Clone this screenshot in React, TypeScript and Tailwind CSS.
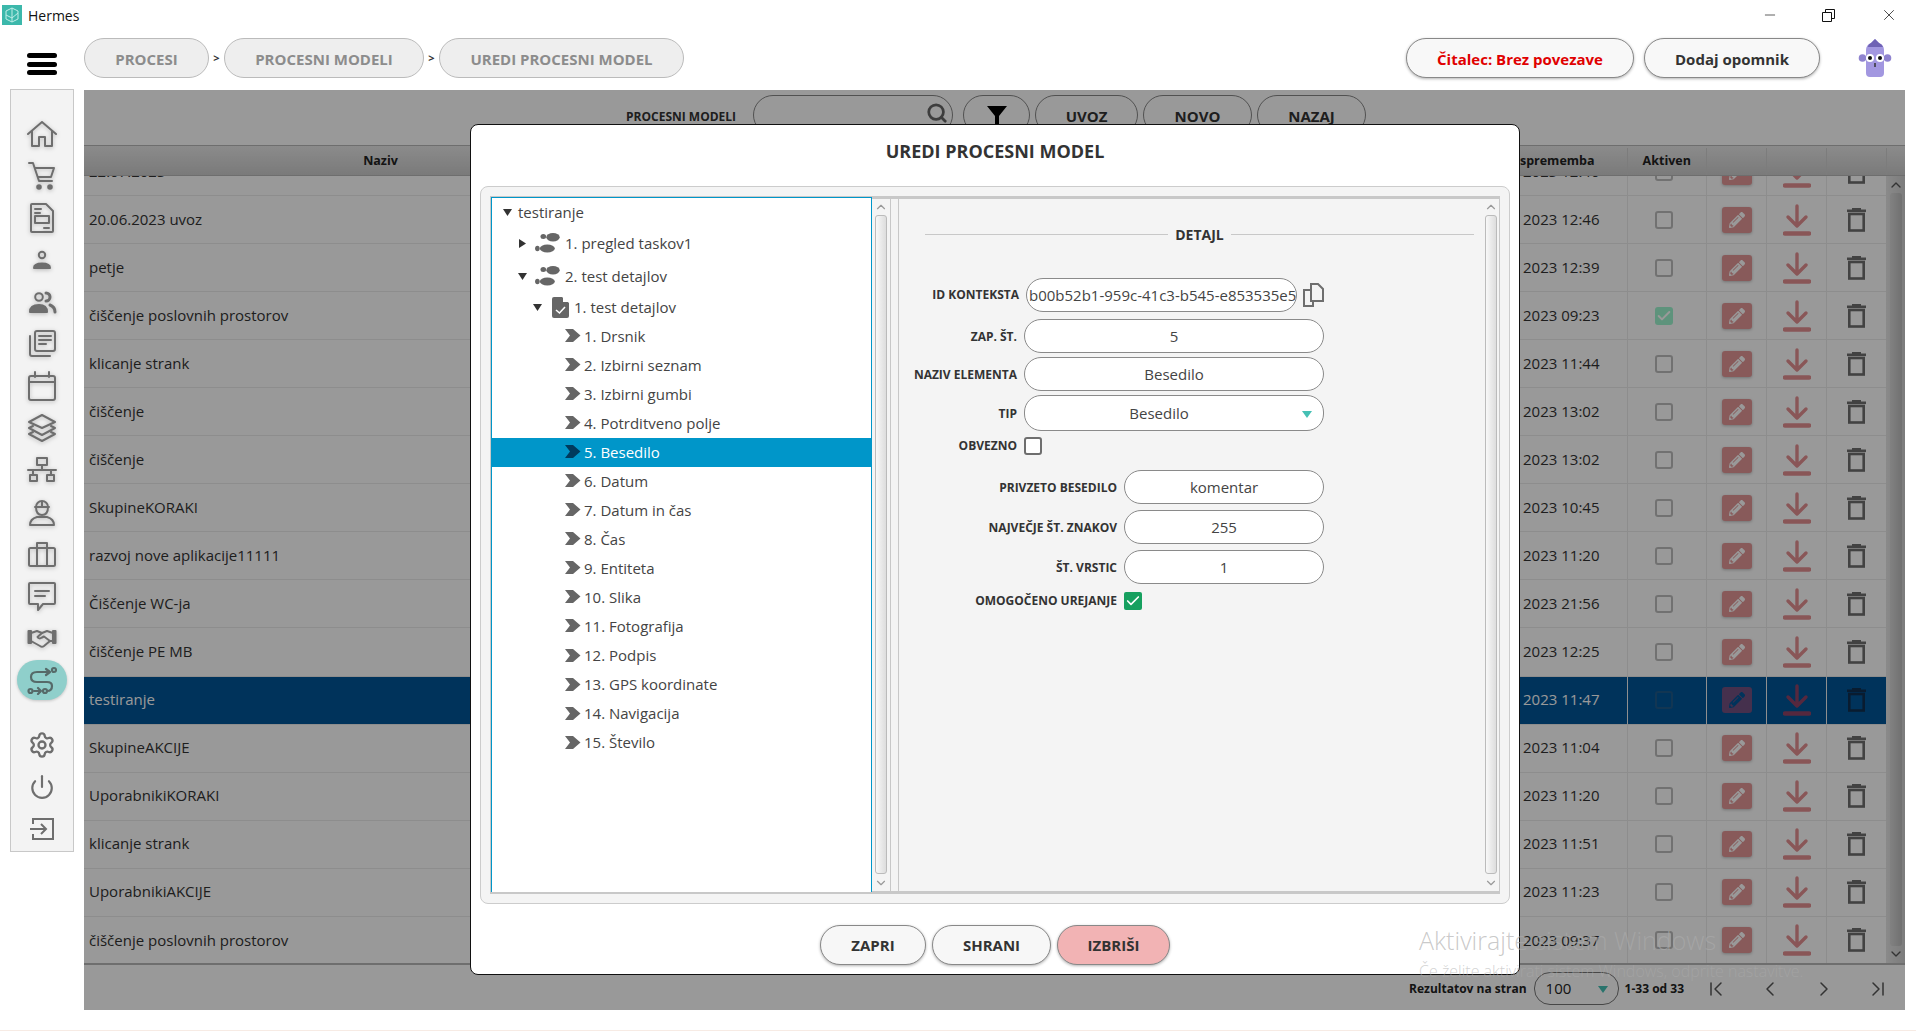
import { Settings, Power, ChevronUp, ChevronDown, ChevronLeft, ChevronRight, ChevronFirst, ChevronLast, Search, Check, Minus, X } from "lucide-react";
import { FaPencilAlt } from "react-icons/fa";

const rows = [
    { name: "22.07.2023", time: "2023 12:40" },
    { name: "20.06.2023 uvoz", time: "2023 12:46" },
    { name: "petje", time: "2023 12:39" },
    { name: "čiščenje poslovnih prostorov", time: "2023 09:23", active: true },
    { name: "klicanje strank", time: "2023 11:44" },
    { name: "čiščenje", time: "2023 13:02" },
    { name: "čiščenje", time: "2023 13:02" },
    { name: "SkupineKORAKI", time: "2023 10:45" },
    { name: "razvoj nove aplikacije11111", time: "2023 11:20" },
    { name: "Čiščenje WC-ja", time: "2023 21:56" },
    { name: "čiščenje PE MB", time: "2023 12:25" },
    { name: "testiranje", time: "2023 11:47", selected: true },
    { name: "SkupineAKCIJE", time: "2023 11:04" },
    { name: "UporabnikiKORAKI", time: "2023 11:20" },
    { name: "klicanje strank", time: "2023 11:51" },
    { name: "UporabnikiAKCIJE", time: "2023 11:23" },
    { name: "čiščenje poslovnih prostorov", time: "2023 09:37" },
];

const leaves = [
    "1. Drsnik", "2. Izbirni seznam", "3. Izbirni gumbi", "4. Potrditveno polje", "5. Besedilo",
    "6. Datum", "7. Datum in čas", "8. Čas", "9. Entiteta", "10. Slika", "11. Fotografija",
    "12. Podpis", "13. GPS koordinate", "14. Navigacija", "15. Število",
];

function NavIcon({ children }: { children: React.ReactNode }) {
    return (
        <svg width="30" height="30" viewBox="0 0 30 30" fill="none" stroke="#6e6e6e" strokeWidth="2" strokeLinecap="round" strokeLinejoin="round" className="drop-shadow-[0_1px_2px_rgba(0,0,0,0.25)]">
            {children}
        </svg>
    );
}

const navIcons = [
    <NavIcon key="home"><path d="M1 15 L15 3 L29 15" /><path d="M5 12 V27 H12 V18 H18 V27 H25 V12" /></NavIcon>,
    <NavIcon key="cart"><path d="M2 2 H6 L12 20 H25 M8 7 H27 L24 16 H11" /><circle cx="12" cy="26" r="1.8" fill="#6e6e6e" /><circle cx="23" cy="26" r="1.8" fill="#6e6e6e" /></NavIcon>,
    <NavIcon key="doc"><path d="M5 1 H19 L26 8 V28 Q26 29 25 29 H5 Q4 29 4 28 V2 Q4 1 5 1 Z" /><path d="M8 6 H14 M8 10 H13 M17 25 H22" /><rect x="8" y="13" width="14" height="7" /></NavIcon>,
    <NavIcon key="user"><circle cx="15" cy="10" r="3.2" /><path d="M7 23 Q7 18.5 15 18.5 Q23 18.5 23 23 Z" fill="#6e6e6e" /></NavIcon>,
    <NavIcon key="users"><circle cx="12" cy="10" r="3.8" /><path d="M19 6 A4 4 0 0 1 19 14" strokeWidth="3" /><path d="M3 25 Q3 18 12 18 Q20 18 20 25 Z" fill="#6e6e6e" /><path d="M23 18 Q28 20 28 25" strokeWidth="3" /></NavIcon>,
    <NavIcon key="list"><rect x="8" y="2" width="20" height="20" rx="2" /><path d="M12 7 H24 M12 11 H24 M12 15 H19" /><path d="M3 7 V25 Q3 27 5 27 H23" /></NavIcon>,
    <NavIcon key="calendar"><rect x="2" y="5" width="26" height="24" rx="2" /><path d="M2 11 H28 M8 1 V6 M22 1 V6" /></NavIcon>,
    <NavIcon key="layers"><path d="M15 2 L28 9 L15 15 L2 9 Z" /><path d="M6 13 L2 15 L15 22 L28 15 L24 13" /><path d="M6 19 L2 21 L15 28 L28 21 L24 19" /></NavIcon>,
    <NavIcon key="network"><rect x="10" y="3" width="10" height="7" /><path d="M15 10 V15 M1 15 H29 M6 15 V20 M24 15 V20" /><rect x="3" y="20" width="7" height="6" /><rect x="20" y="20" width="7" height="6" /></NavIcon>,
    <NavIcon key="worker"><path d="M9 10 A6 6 0 0 1 21 10 M8 10 H22 M15 4 V10" /><path d="M9 10 Q9 18 15 18 Q21 18 21 10" /><path d="M3 28 Q3 22 10 20 H20 Q27 22 27 28 Z" /></NavIcon>,
    <NavIcon key="case"><rect x="2" y="9" width="26" height="18" rx="1.5" /><path d="M10 9 V4 H20 V9 M10 9 V27 M20 9 V27" /></NavIcon>,
    <NavIcon key="message"><path d="M3 2 H27 Q28 2 28 3 V22 Q28 23 27 23 H16 L11 29 V23 H3 Q2 23 2 22 V3 Q2 2 3 2 Z" /><path d="M8 10 H22 M8 15 H18" /></NavIcon>,
    <NavIcon key="hands">
        <path d="M1.5 8 H4 V20 H1.5 Z M26 8 H28.5 V20 H26 Z" fill="#6e6e6e" />
        <path d="M4 10 L10 8 L15 10 L20 8 L26 10 V18 H23 L17 23 Q15 24.5 13 23 L4 18" />
        <path d="M15 10 L10.5 14 Q12 16.5 15 14.5 L17 13.5 L23 18" />
    </NavIcon>,
];

function Checkbox({ checked, selected }: { checked?: boolean; selected?: boolean }) {
    if (checked) {
        return (
            <div className="w-[18px] h-[18px] rounded-[3px] bg-[#9df5cf] flex items-center justify-center">
                <Check size={16} color="#ffffff" strokeWidth={3} />
            </div>
        );
    }
    return <div className={`w-[18px] h-[18px] rounded-[3px] border-2 ${selected ? "border-[#1f5a8a]" : "border-[#bdbdbd]"}`} />;
}

function DownloadIcon({ color }: { color: string }) {
    return (
        <svg width="28" height="32" viewBox="0 0 28 32" fill="none" stroke={color} strokeWidth="3.4" strokeLinecap="round" strokeLinejoin="round">
            <path d="M14 2 V22 M5 13 L14 22 L23 13" />
            <path d="M2 29.5 H26" strokeWidth="4.6" />
        </svg>
    );
}

function TrashIcon({ color }: { color: string }) {
    return (
        <svg width="19" height="24" viewBox="0 0 19 24" fill="none" stroke={color} strokeWidth="2.6">
            <rect x="2.3" y="6" width="14.4" height="16.5" />
            <path d="M0 2.8 H19" />
            <path d="M5 1 H14" strokeWidth="2" />
        </svg>
    );
}

function TableRow({ name, time, active, selected }: { name: string; time: string; active?: boolean; selected?: boolean }) {
    const line = selected ? "border-[#eeeeee]" : "border-[#ebebeb]";
    return (
        <div className={`flex h-[48.06px] shrink-0 items-center text-[15px] border-b border-[#ebebeb] ${selected ? "bg-[#005598] text-white" : "bg-white text-[#333333]"}`}>
            <div className="flex-1 pl-[5px] pb-[1px]">{name}</div>
            <div className="w-[240px] h-full flex items-center justify-end pr-[27px] pb-[1px] whitespace-pre">20.06. {time}</div>
            <div className={`w-[79.5px] h-full flex items-center pl-[27px] border-l ${line}`}>
                <Checkbox checked={active} selected={selected} />
            </div>
            <div className={`w-[60px] h-full flex items-center justify-center border-l ${line}`}>
                <div className={`w-[30px] h-[26px] rounded-[3px] flex items-center justify-center ${selected ? "bg-[#735080]" : "bg-[#e39696] shadow-[0_1px_3px_rgba(0,0,0,0.25)]"}`}>
                    <FaPencilAlt size={16} color={selected ? "#005598" : "#ffffff"} />
                </div>
            </div>
            <div className={`w-[60px] h-full flex items-center justify-center border-l ${line}`}>
                <DownloadIcon color={selected ? "#8f4468" : "#e59092"} />
            </div>
            <div className={`w-[60px] h-full flex items-center justify-center border-l ${line}`}>
                <TrashIcon color={selected ? "#0f3050" : "#6e6e6e"} />
            </div>
        </div>
    );
}

function ScrollBar({ className }: { className: string }) {
    return (
        <div className={`flex flex-col items-center bg-[#f4f4f4] ${className}`}>
            <ChevronUp size={14} color="#999999" className="mt-[1px] shrink-0" />
            <div className="flex-1 w-[12px] mt-[1px] rounded-[3px] border border-[#bbbbbb] bg-gradient-to-r from-[#f8f8f8] to-[#dddddd]" />
            <ChevronDown size={14} color="#999999" className="mt-[2px] mb-[1px] shrink-0" />
        </div>
    );
}

function Steps({ className }: { className?: string }) {
    return (
        <svg width="25" height="20" viewBox="0 0 25 20" fill="#666666" className={className}>
            <ellipse cx="18" cy="4.3" rx="6.7" ry="4.2" />
            <ellipse cx="8.3" cy="3.6" rx="2.8" ry="2.5" />
            <ellipse cx="12.3" cy="15.5" rx="7.5" ry="4" />
            <ellipse cx="2.4" cy="15.5" rx="2.3" ry="2.8" />
        </svg>
    );
}

function LeafArrow({ color }: { color: string }) {
    return (
        <svg width="16" height="14" viewBox="0 0 16 14" fill={color} className="shrink-0">
            <path d="M0 0 L8 0 L15.5 6.5 L8 13 L0 13 L5 6.5 Z" />
        </svg>
    );
}

function Caret({ open }: { open: boolean }) {
    return open ? (
        <svg width="9" height="7" viewBox="0 0 9 7" fill="#333333" className="shrink-0"><path d="M0 0 H9 L4.5 7 Z" /></svg>
    ) : (
        <svg width="7" height="9" viewBox="0 0 7 9" fill="#333333" className="shrink-0"><path d="M0 0 V9 L7 4.5 Z" /></svg>
    );
}

function Field({ label, value, labelWidth, inputWidth, top, height = 34, select }: { label: string; value: string; labelWidth: number; inputWidth: number; top: number; height?: number; select?: boolean }) {
    return (
        <div className="flex items-center gap-[7px]" style={{ marginTop: top }}>
            <div className="text-right text-[12px] font-bold text-[#333333] pt-[1px]" style={{ width: labelWidth }}>{label}</div>
            <div className="relative flex items-center justify-center rounded-[17px] border border-[#8a8a8a] bg-white text-[15px] text-[#444444]" style={{ width: inputWidth, height }}>
                <span className={select ? "mr-[30px]" : ""}>{value}</span>
                {select && <div className="absolute right-[11px] top-[15px] w-0 h-0 border-l-[5px] border-r-[5px] border-t-[7px] border-l-transparent border-r-transparent border-t-[#45c0b4]" />}
            </div>
        </div>
    );
}

export default function App() {
    return (
        <div className="relative w-[1916px] h-[1031px] overflow-hidden bg-white font-['Open_Sans',sans-serif]">
            {/* title bar */}
            <div className="flex items-center h-[30px] pl-[2px]">
                <div className="w-[20px] h-[20px] bg-[#3cb8ab] flex items-center justify-center">
                    <svg width="14" height="16" viewBox="0 0 14 16" fill="none" stroke="#bfeee8" strokeWidth="1"><path d="M7 1 L13 4 V12 L7 15 L1 12 V4 Z M7 1 V15 M1 8 L7 11 L13 6" /></svg>
                </div>
                <span className="ml-[6px] text-[14px] text-[#111111]">Hermes</span>
                <div className="ml-auto flex items-center text-[#111111]">
                    <Minus size={16} strokeWidth={1} className="mr-[44px]" />
                    <svg width="13" height="13" viewBox="0 0 13 13" fill="none" stroke="#111111" className="mr-[45px]"><path d="M0.5 3.5 H9.5 V12.5 H0.5 Z M3.5 3.5 V0.5 H12.5 V9.5 H9.5" /></svg>
                    <X size={18} strokeWidth={1} className="mr-[18px]" />
                </div>
            </div>

            {/* top bar */}
            <div className="flex h-[60px] pt-[8px] items-start">
                <div className="flex flex-col gap-[3.5px] ml-[27px] mt-[15px] w-[30px]">
                    <div className="h-[5px] rounded-full bg-black" />
                    <div className="h-[5px] rounded-full bg-black" />
                    <div className="h-[5px] rounded-full bg-black" />
                </div>
                <div className="flex items-center ml-[27px] h-[40px] text-[15px] font-bold text-[#8c8c8c]">
                    <div className="w-[125px] h-full pt-[2px] rounded-[20px] border border-[#bbbbbb] bg-[#eeeeee] flex items-center justify-center">PROCESI</div>
                    <span className="w-[15px] text-center text-[11px] text-[#333333]">&gt;</span>
                    <div className="w-[200px] h-full pt-[2px] rounded-[20px] border border-[#bbbbbb] bg-[#eeeeee] flex items-center justify-center">PROCESNI MODELI</div>
                    <span className="w-[15px] text-center text-[11px] text-[#333333]">&gt;</span>
                    <div className="w-[245px] h-full pt-[2px] rounded-[20px] border border-[#bbbbbb] bg-[#eeeeee] flex items-center justify-center">UREDI PROCESNI MODEL</div>
                </div>
                <div className="ml-auto flex items-center h-[40px] text-[15px] font-bold">
                    <div className="w-[228px] h-full pt-[2px] rounded-[20px] border border-[#888888] bg-[#f8f8f8] shadow-[0_1px_3px_rgba(0,0,0,0.3)] flex items-center justify-center text-[#e00000]">Čitalec: Brez povezave</div>
                    <div className="w-[176px] h-full pt-[2px] ml-[10px] rounded-[20px] border border-[#888888] bg-[#f8f8f8] shadow-[0_1px_3px_rgba(0,0,0,0.3)] flex items-center justify-center text-[#333333]">Dodaj opomnik</div>
                    <svg width="34" height="40" viewBox="0 0 34 40" className="ml-[38px] mr-[24px]">
                        <circle cx="4.5" cy="20" r="3.8" fill="#8f83cf" />
                        <circle cx="29.5" cy="20" r="3.8" fill="#8f83cf" />
                        <path d="M13 5 L17 1 L21 5 Q26 7 26 12 V35 Q26 39 22 39 H12 Q8 39 8 35 V12 Q8 7 13 5 Z" fill="#a297e0" />
                        <path d="M13 5 L17 1 L21 5 Q24 6 25 9 L10 9 Q10 6 13 5 Z" fill="#6f62b5" />
                        <circle cx="12" cy="20" r="4" fill="#ffffff" />
                        <circle cx="22" cy="20" r="4" fill="#ffffff" />
                        <circle cx="12" cy="20" r="2" fill="#111111" />
                        <circle cx="22" cy="20" r="2" fill="#111111" />
                        <path d="M17 25 V29" stroke="#333333" strokeWidth="1.5" />
                    </svg>
                </div>
            </div>

            <div className="flex items-start">
                {/* side menu */}
                <div className="ml-[10px] -mt-px w-[64px] h-[763px] border border-[#c8c8c8] bg-[#f3f3f3] flex flex-col items-center pt-[23px]">
                    {navIcons.map((icon, i) => (
                        <div key={i} className="h-[42px] shrink-0 flex items-center justify-center">{icon}</div>
                    ))}
                    <div className="w-[50px] h-[40px] mt-[1px] shrink-0 rounded-full bg-[#8fcfcb] shadow-[0_1px_3px_rgba(0,0,0,0.2)] flex items-center justify-center">
                        <svg width="30" height="30" viewBox="0 0 30 30" fill="none" stroke="#566a69" strokeWidth="2.2" strokeLinecap="round" strokeLinejoin="round">
                            <path d="M19 4 L23 7 L19 10 M22 7 H10 Q4 7 4 12 Q4 17 10 17 H20 Q25 17 25 21 Q25 26 20 26" />
                            <circle cx="27" cy="5" r="2" />
                            <circle cx="3.5" cy="26" r="2" />
                            <path d="M7 26 H14 M11 23 L14 26 L11 29" />
                            <circle cx="18" cy="26" r="2" />
                        </svg>
                    </div>
                    <div className="h-[42px] mt-[24px] shrink-0 flex items-center"><Settings size={28} color="#6e6e6e" strokeWidth={2} /></div>
                    <div className="h-[42px] shrink-0 flex items-center"><Power size={26} color="#6e6e6e" strokeWidth={2} /></div>
                    <div className="h-[42px] shrink-0 flex items-center">
                        <svg width="26" height="26" viewBox="0 0 26 26" fill="none" stroke="#6e6e6e" strokeWidth="2"><path d="M4 8 V3 H24 V23 H4 V18 M1 13 H17 M12 8 L17 13 L12 18" /></svg>
                    </div>
                </div>

                {/* main panel */}
                <div className="relative ml-[10px] w-[1821px] h-[920px] bg-white flex flex-col">
                    <div className="h-[55px] shrink-0 flex items-start">
                        <div className="ml-[542px] mt-[18px] w-[127px] text-[12px] font-bold text-[#333333]">PROCESNI MODELI</div>
                        <div className="relative w-[200px] h-[40px] mt-[5px] rounded-[20px] border border-[#888888]">
                            <Search size={22} color="#666666" strokeWidth={3} className="absolute right-[4px] top-[6px]" />
                        </div>
                        <div className="flex gap-[5px] ml-[10px] mt-[5px] text-[15px] font-bold text-[#333333]">
                            <div className="w-[67px] h-[40px] pt-[10px] rounded-[20px] border border-[#888888] flex justify-center">
                                <svg width="20" height="22" viewBox="0 0 20 22" fill="#000000"><path d="M0 0 H20 L12 10 V22 H8 V10 Z" /></svg>
                            </div>
                            <div className="w-[103px] h-[40px] pt-[2px] rounded-[20px] border border-[#888888] flex items-center justify-center">UVOZ</div>
                            <div className="w-[109px] h-[40px] pt-[2px] rounded-[20px] border border-[#888888] flex items-center justify-center">NOVO</div>
                            <div className="w-[109px] h-[40px] pt-[2px] rounded-[20px] border border-[#888888] flex items-center justify-center">NAZAJ</div>
                        </div>
                    </div>

                    {/* table */}
                    <div className="flex h-[31px] pt-[2px] shrink-0 items-center border-y border-[#b8b8b8] bg-gradient-to-b from-[#e8e8e8] to-[#cccccc] text-[12.5px] font-bold text-[#222222]">
                        <div className="w-[593px] text-center">Naziv</div>
                        <div className="flex-1" />
                        <div className="w-[240px] pr-[32px] text-right">Zadnja sprememba</div>
                        <div className="w-[79.5px] h-full flex items-center justify-center border-l border-[#cfcfcf]">Aktiven</div>
                        <div className="w-[60px] h-full border-l border-[#cfcfcf]" />
                        <div className="w-[60px] h-full border-l border-[#cfcfcf]" />
                        <div className="w-[60px] h-full border-l border-[#cfcfcf]" />
                        <div className="w-[19px] h-full border-l border-[#cfcfcf]" />
                    </div>
                    <div className="flex h-[789px] shrink-0 overflow-hidden border-b-2 border-[#b8b8b8]">
                        <div className="flex-1 flex flex-col -mt-[28px]">
                            {rows.map((r, i) => <TableRow key={i} {...r} />)}
                        </div>
                        <div className="w-[19px] flex flex-col items-center bg-gradient-to-r from-[#e6e6e6] to-[#cfcfcf]">
                            <ChevronUp size={16} color="#555555" className="mt-[1px] shrink-0" />
                            <div className="flex-1 w-[12px] rounded-[3px] bg-gradient-to-r from-[#d8d8d8] to-[#bcbcbc]" />
                            <ChevronDown size={16} color="#555555" className="mb-[1px] shrink-0" />
                        </div>
                    </div>
                    <div className="flex-1 flex items-center justify-end pt-[2px] text-[#222222]">
                        <span className="text-[12px] font-bold">Rezultatov na stran</span>
                        <div className="relative w-[85px] h-[33px] ml-[7px] rounded-[16px] border border-[#777777] flex items-center pl-[11px] text-[15px]">
                            100
                            <div className="absolute right-[10px] top-[13px] w-0 h-0 border-l-[5px] border-r-[5px] border-t-[7px] border-l-transparent border-r-transparent border-t-[#45c0b4]" />
                        </div>
                        <span className="ml-[6px] text-[12px] font-bold">1-33 od 33</span>
                        <ChevronFirst size={24} color="#555555" strokeWidth={1.5} className="ml-[20px]" />
                        <ChevronLeft size={24} color="#555555" strokeWidth={1.5} className="ml-[30px]" />
                        <ChevronRight size={24} color="#555555" strokeWidth={1.5} className="ml-[30px]" />
                        <ChevronLast size={24} color="#555555" strokeWidth={1.5} className="ml-[30px] mr-[15px]" />
                    </div>
                    <div className="absolute inset-0 bg-black/40" />
                </div>
            </div>

            <div className="h-px mt-[20px] bg-[#f7ebe4]" />

            {/* dialog */}
            <div className="absolute left-[470px] top-[124px] w-[1050px] h-[851px] rounded-[8px] border border-[#111111] bg-white flex flex-col items-center">
                <div className="h-[61px] pt-[13px] shrink-0 text-[18px] leading-[26px] font-bold text-[#333333]">UREDI PROCESNI MODEL</div>
                <div className="w-[1030px] h-[718px] shrink-0 rounded-[8px] border border-[#cccccc] bg-[#f4f4f4] p-[9px]">
                    <div className="flex h-full border-y-[3px] border-x border-[#c8c8c8]">
                        <div className="w-[381px] border-x border-t border-[#0096c9] bg-white text-[15px] text-[#444444] -mt-[2px] -mb-[1px] pt-[1px]">
                            <div className="flex items-center h-[27.5px] pl-[11px]">
                                <Caret open />
                                <span className="ml-[6px] -mt-[1px]">testiranje</span>
                            </div>
                            <div className="flex items-center h-[33px] pl-[27px]">
                                <Caret open={false} />
                                <Steps className="ml-[9px]" />
                                <span className="ml-[5px]">1. pregled taskov1</span>
                            </div>
                            <div className="flex items-center h-[33px] pl-[26px]">
                                <Caret open />
                                <Steps className="ml-[8px]" />
                                <span className="ml-[5px]">2. test detajlov</span>
                            </div>
                            <div className="flex items-center h-[29px] pl-[41px]">
                                <Caret open />
                                <svg width="17" height="21" viewBox="0 0 17 21" fill="#666666" className="ml-[10px]">
                                    <path d="M2 0 H10 L17 6 V19 Q17 21 15 21 H2 Q0 21 0 19 V2 Q0 0 2 0 Z" />
                                    <path d="M11 0 L17 5 H11 Z" fill="#ffffff" />
                                    <path d="M4 13 L7.5 16 L13 10" fill="none" stroke="#ffffff" strokeWidth="1.6" />
                                </svg>
                                <span className="ml-[5px]">1. test detajlov</span>
                            </div>
                            {leaves.map((leaf) => {
                                const on = leaf === "5. Besedilo";
                                return (
                                    <div key={leaf} className={`flex items-center h-[29.05px] pl-[73px] ${on ? "bg-[#0096c9] text-white" : ""}`}>
                                        <LeafArrow color={on ? "#003a5c" : "#666666"} />
                                        <span className="ml-[3px]">{leaf}</span>
                                    </div>
                                );
                            })}
                        </div>
                        <ScrollBar className="w-[18px]" />
                        <div className="w-[9px] border-x border-[#c8c8c8] bg-[#f4f4f4]" />
                        <div className="flex-1 flex bg-[#f4f4f4]">
                            <div className="flex-1 pt-[30px]">
                                <div className="flex items-center ml-[26px] w-[549px] h-[10px]">
                                    <div className="w-[243px] h-px bg-[#c8c8c8]" />
                                    <div className="w-[63px] text-center text-[14px] font-bold text-[#333333]">DETAJL</div>
                                    <div className="flex-1 h-px bg-[#c8c8c8]" />
                                </div>
                                <div className="flex items-center mt-[39px]">
                                    <div className="w-[120px] text-right text-[12px] font-bold text-[#333333]">ID KONTEKSTA</div>
                                    <div className="ml-[7px] w-[271px] h-[34px] rounded-[17px] border border-[#8a8a8a] bg-white flex items-center overflow-hidden whitespace-nowrap pl-[2px] text-[15px] text-[#444444]">b00b52b1-959c-41c3-b545-e853535e5a1c</div>
                                    <svg width="22" height="24" viewBox="0 0 22 24" fill="none" stroke="#6e6e6e" strokeWidth="2" className="ml-[5px]"><path d="M9 5 V1 H16 L21 6 V18 H9 Z" /><path d="M9 7 H2 V23 H11 V18" /></svg>
                                </div>
                                <Field label="ZAP. ŠT." value="5" labelWidth={118} inputWidth={300} top={7} />
                                <Field label="NAZIV ELEMENTA" value="Besedilo" labelWidth={118} inputWidth={300} top={4} />
                                <Field label="TIP" value="Besedilo" labelWidth={118} inputWidth={300} top={4} height={36} select />
                                <div className="flex items-center gap-[7px] mt-[6px]">
                                    <div className="w-[118px] text-right text-[12px] font-bold text-[#333333]">OBVEZNO</div>
                                    <div className="w-[18px] h-[18px] rounded-[3px] border-2 border-[#6e6e6e] bg-white" />
                                </div>
                                <Field label="PRIVZETO BESEDILO" value="komentar" labelWidth={218} inputWidth={200} top={15} />
                                <Field label="NAJVEČJE ŠT. ZNAKOV" value="255" labelWidth={218} inputWidth={200} top={6} />
                                <Field label="ŠT. VRSTIC" value="1" labelWidth={218} inputWidth={200} top={6} />
                                <div className="flex items-center gap-[7px] mt-[8px]">
                                    <div className="w-[218px] text-right text-[12px] font-bold text-[#333333]">OMOGOČENO UREJANJE</div>
                                    <div className="w-[18px] h-[18px] rounded-[2px] bg-[#16a05f] flex items-center justify-center">
                                        <Check size={16} color="#ffffff" strokeWidth={2.5} />
                                    </div>
                                </div>
                            </div>
                            <ScrollBar className="w-[17px]" />
                        </div>
                    </div>
                </div>
                <div className="flex gap-[6px] mt-[21px] text-[15px] font-bold text-[#333333]">
                    <div className="w-[106px] h-[40px] rounded-[20px] border border-[#888888] bg-[#f7f7f7] shadow-[0_1px_3px_rgba(0,0,0,0.3)] flex items-center justify-center">ZAPRI</div>
                    <div className="w-[119px] h-[40px] rounded-[20px] border border-[#888888] bg-[#f7f7f7] shadow-[0_1px_3px_rgba(0,0,0,0.3)] flex items-center justify-center">SHRANI</div>
                    <div className="w-[113px] h-[40px] rounded-[20px] border border-[#888888] bg-[#f2b3b4] shadow-[0_1px_3px_rgba(0,0,0,0.3)] flex items-center justify-center">IZBRIŠI</div>
                </div>
            </div>

            {/* activation watermark */}
            <div className="absolute left-[1419px] top-[922px] text-[25px] font-light leading-[36px] text-[#ababab]/65 whitespace-nowrap">
                Aktivirajte sistem Windows
                <div className="mt-[1px] text-[16px] leading-[24px] text-[#ababab]/55">Če želite aktivirati sistem Windows, odprite nastavitve.</div>
            </div>
        </div>
    );
}
